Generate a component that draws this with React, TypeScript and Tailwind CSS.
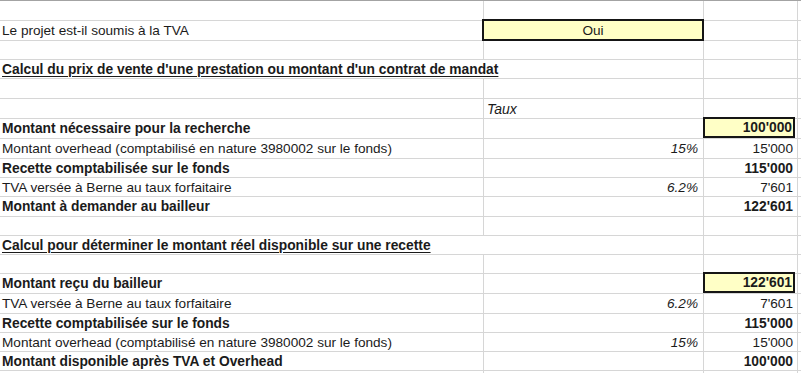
type Row = {
  h: string;
  label?: string;
  bold?: boolean;
  title?: boolean;
  rate?: string;
  value?: string;
  boxed?: boolean;
  oui?: boolean;
  taux?: boolean;
};

const rows: Row[] = [
  { h: "h-[20px]" },
  { h: "h-[20px]", label: "Le projet est-il soumis à la TVA", oui: true },
  { h: "h-[19px]" },
  { h: "h-[19px]", label: "Calcul du prix de vente d'une prestation ou montant d'un contrat de mandat", title: true },
  { h: "h-[20px]" },
  { h: "h-[20px]", taux: true },
  { h: "h-[20px]", label: "Montant nécessaire pour la recherche", bold: true, value: "100'000", boxed: true },
  { h: "h-[20px]", label: "Montant overhead (comptabilisé en nature 3980002 sur le fonds)", rate: "15%", value: "15'000" },
  { h: "h-[19px]", label: "Recette comptabilisée sur le fonds", bold: true, value: "115'000" },
  { h: "h-[19px]", label: "TVA versée à Berne au taux forfaitaire", rate: "6.2%", value: "7'601" },
  { h: "h-[20px]", label: "Montant à demander au bailleur", bold: true, value: "122'601" },
  { h: "h-[19px]" },
  { h: "h-[19px]", label: "Calcul pour déterminer le montant réel disponible sur une recette", title: true },
  { h: "h-[19px]" },
  { h: "h-[20px]", label: "Montant reçu du bailleur", bold: true, value: "122'601", boxed: true },
  { h: "h-[20px]", label: "TVA versée à Berne au taux forfaitaire", rate: "6.2%", value: "7'601" },
  { h: "h-[19px]", label: "Recette comptabilisée sur le fonds", bold: true, value: "115'000" },
  { h: "h-[19px]", label: "Montant overhead (comptabilisé en nature 3980002 sur le fonds)", rate: "15%", value: "15'000" },
  { h: "h-[19px]", label: "Montant disponible après TVA et Overhead", bold: true, value: "100'000" },
  { h: "h-[20px]" },
];

const SheetRow = ({ row }: { row: Row }) => {
  const weight = row.bold || row.title ? "font-bold text-[13.8px]" : "font-normal";
  return (
    <div className={`flex border-b border-[#d6d6d6] ${row.h}`}>
      {row.title ? (
        // title text spills over column B, no divider under it
        <div className="w-[704px] flex items-center pl-[2px] pt-px border-r border-[#d6d6d6] whitespace-nowrap">
          <span className="font-bold text-[13.8px] underline underline-offset-2 decoration-1">{row.label}</span>
        </div>
      ) : (
        <>
          <div className={`w-[484px] flex items-center pl-[2px] pt-px border-r border-[#d6d6d6] whitespace-nowrap ${weight}`}>
            {row.label}
          </div>
          <div className="relative w-[220px] flex items-center justify-end pr-[5px] pt-px border-r border-[#d6d6d6] italic">
            {row.rate}
            {row.taux && <span className="mr-auto pl-[3px] text-[14px]">Taux</span>}
            {row.oui && (
              <div className="absolute -top-[2px] -left-[2px] -right-px -bottom-px border-2 border-[#151515] bg-[#ffffc6] flex items-center justify-center pt-px not-italic">
                Oui
              </div>
            )}
          </div>
        </>
      )}
      <div className={`relative w-[94px] flex items-center justify-end pr-[4px] pt-px border-r border-[#d6d6d6] ${weight}`}>
        {row.boxed ? (
          <div className="absolute -top-[2px] -left-px right-[2px] bottom-0 border-2 border-[#151515] bg-[#ffffc6] flex items-center justify-end pr-[1px] pt-px">
            {row.value}
          </div>
        ) : (
          row.value
        )}
      </div>
      <div className="flex-1" />
    </div>
  );
};

export default function App() {
  return (
    <div className="w-[801px] h-[373px] overflow-hidden bg-white text-[13.6px] leading-none text-[#1b1b1b] font-['Liberation_Sans',Arial,sans-serif]">
      <div className="border-t border-[#a3a3a3]">
        {rows.map((row, i) => (
          <SheetRow key={i} row={row} />
        ))}
      </div>
    </div>
  );
}
